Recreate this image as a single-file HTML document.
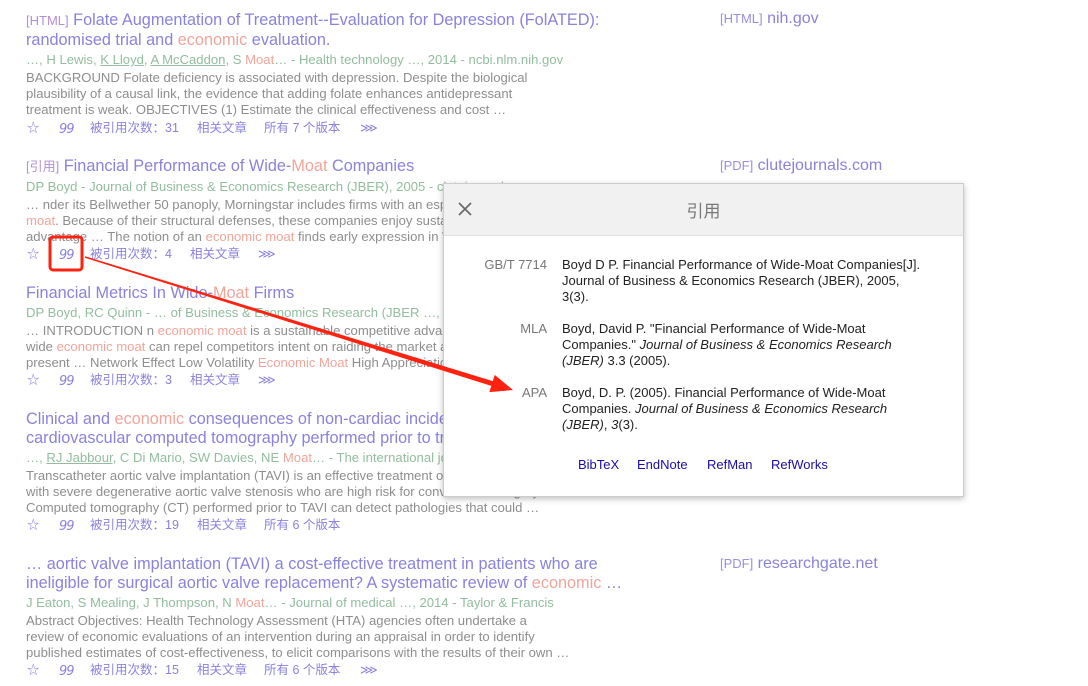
<!DOCTYPE html>
<html><head><meta charset="utf-8"><style>
body{margin:0;width:1088px;height:686px;background:#fff;position:relative;overflow:hidden;font-family:"Liberation Sans","Noto Sans CJK SC",sans-serif}
.l{position:absolute;white-space:nowrap;left:26px}
.t{font-size:16.25px;color:#8a82dc;line-height:20px}
.m{font-size:13.1px;color:#92bd9e;line-height:16px}
.s{font-size:13.1px;color:#8e8e8e;line-height:16px}
.a{position:absolute;white-space:nowrap;font-size:12.5px;color:#8a82dc;line-height:16px;left:0;width:600px;height:16px}
.a span{position:absolute;top:0}
.r{color:#f0a59a}
.b{font-size:13px;color:#b38fd6}
u{text-decoration:underline}
.side{position:absolute;left:720px;font-size:16px;color:#8a82dc;white-space:nowrap}
.side b{font-weight:normal;font-size:13px;color:#9a90dc}
#dlg{position:absolute;left:443px;top:183px;width:519px;height:312px;background:#fff;border:1px solid #ccc;box-shadow:0 2px 6px rgba(0,0,0,.25)}
#hd{height:51px;background:#f1f1f1;border-bottom:1px solid #e0e0e0;position:relative}
#hd .ti{position:absolute;left:0;right:0;text-align:center;top:13px;font-size:17px;color:#777}
.row{position:absolute;font-size:13px;line-height:16px;color:#222}
.lab{position:absolute;width:103px;text-align:right;left:0;color:#777;font-size:13px}
.txt{position:absolute;left:118px;width:362px}
.lk{position:absolute;top:273px;font-size:13px;color:#1a0dab}
.a span.q{font-family:"DejaVu Sans",sans-serif;font-style:italic;font-size:13px;letter-spacing:-1px;top:2px}
</style></head><body>

<div class="l t" style="top:10px"><span class="b">[HTML]</span> Folate Augmentation of Treatment--Evaluation for Depression (FolATED):</div>
<div class="l t" style="top:30px">randomised trial and <span class="r">economic</span> evaluation.</div>
<div class="l m" style="top:52px">…, H Lewis, <u>K Lloyd</u>, <u>A McCaddon</u>, S <span class="r">Moat</span>… - Health technology …, 2014 - ncbi.nlm.nih.gov</div>
<div class="l s" style="top:70px">BACKGROUND Folate deficiency is associated with depression. Despite the biological</div>
<div class="l s" style="top:86px">plausibility of a causal link, the evidence that adding folate enhances antidepressant</div>
<div class="l s" style="top:102px">treatment is weak. OBJECTIVES (1) Estimate the clinical effectiveness and cost …</div>
<div class="a" style="top:120px"><span style="left:27px">☆</span><span class="q" style="left:59px">99</span><span style="left:90px">被引用次数：31</span><span style="left:197px">相关文章</span><span style="left:264px">所有 7 个版本</span><span style="left:360px">⋙</span></div>
<div class="side" style="top:10px"><b>[HTML]</b> nih.gov</div>

<div class="l t" style="top:156px"><span class="b">[引用]</span> Financial Performance of Wide-<span class="r">Moat</span> Companies</div>
<div class="l m" style="top:179px">DP Boyd - Journal of Business &amp; Economics Research (JBER), 2005 - clutejournals</div>
<div class="l s" style="top:197px">… nder its Bellwether 50 panoply, Morningstar includes firms with an especially wide economic</div>
<div class="l s" style="top:213px"><span class="r">moat</span>. Because of their structural defenses, these companies enjoy sustained competitive</div>
<div class="l s" style="top:229px">advantage … The notion of an <span class="r">economic moat</span> finds early expression in Warren</div>
<div class="a" style="top:246px"><span style="left:27px">☆</span><span class="q" style="left:59px">99</span><span style="left:90px">被引用次数：4</span><span style="left:190px">相关文章</span><span style="left:258px">⋙</span></div>
<div class="side" style="top:157px"><b>[PDF]</b> clutejournals.com</div>

<div class="l t" style="top:283px">Financial Metrics In Wide-<span class="r">Moat</span> Firms</div>
<div class="l m" style="top:305px">DP Boyd, RC Quinn - … of Business &amp; Economics Research (JBER …, 2005</div>
<div class="l s" style="top:323px">… INTRODUCTION n <span class="r">economic moat</span> is a sustainable competitive advantage</div>
<div class="l s" style="top:339px">wide <span class="r">economic moat</span> can repel competitors intent on raiding the market and</div>
<div class="l s" style="top:355px">present … Network Effect Low Volatility <span class="r">Economic Moat</span> High Appreciation</div>
<div class="a" style="top:372px"><span style="left:27px">☆</span><span class="q" style="left:59px">99</span><span style="left:90px">被引用次数：3</span><span style="left:190px">相关文章</span><span style="left:258px">⋙</span></div>

<div class="l t" style="top:409px">Clinical and <span class="r">economic</span> consequences of non-cardiac incidental findings</div>
<div class="l t" style="top:428px">cardiovascular computed tomography performed prior to transcatheter</div>
<div class="l m" style="top:450px">…, <u>RJ Jabbour</u>, C Di Mario, SW Davies, NE <span class="r">Moat</span>… - The international journal</div>
<div class="l s" style="top:468px">Transcatheter aortic valve implantation (TAVI) is an effective treatment option for patients</div>
<div class="l s" style="top:484px">with severe degenerative aortic valve stenosis who are high risk for conventional surgery.</div>
<div class="l s" style="top:500px">Computed tomography (CT) performed prior to TAVI can detect pathologies that could …</div>
<div class="a" style="top:517px"><span style="left:27px">☆</span><span class="q" style="left:59px">99</span><span style="left:90px">被引用次数：19</span><span style="left:197px">相关文章</span><span style="left:264px">所有 6 个版本</span></div>

<div class="l t" style="top:554px">… aortic valve implantation (TAVI) a cost-effective treatment in patients who are</div>
<div class="l t" style="top:573px">ineligible for surgical aortic valve replacement? A systematic review of <span class="r">economic</span> …</div>
<div class="l m" style="top:595px">J Eaton, S Mealing, J Thompson, N <span class="r">Moat</span>… - Journal of medical …, 2014 - Taylor &amp; Francis</div>
<div class="l s" style="top:613px">Abstract Objectives: Health Technology Assessment (HTA) agencies often undertake a</div>
<div class="l s" style="top:629px">review of economic evaluations of an intervention during an appraisal in order to identify</div>
<div class="l s" style="top:645px">published estimates of cost-effectiveness, to elicit comparisons with the results of their own …</div>
<div class="a" style="top:662px"><span style="left:27px">☆</span><span class="q" style="left:59px">99</span><span style="left:90px">被引用次数：15</span><span style="left:197px">相关文章</span><span style="left:264px">所有 6 个版本</span><span style="left:360px">⋙</span></div>
<div class="side" style="top:555px"><b>[PDF]</b> researchgate.net</div>

<div id="dlg">
 <div id="hd">
  <svg style="position:absolute;left:14px;top:18px" width="14" height="14"><path d="M1 1L13 13M13 1L1 13" stroke="#666" stroke-width="1.6"/></svg>
  <div class="ti">引用</div>
 </div>
 <div class="row" style="left:0;top:73px;width:519px"><div class="lab">GB/T 7714</div><div class="txt">Boyd D P. Financial Performance of Wide-Moat Companies[J]. Journal of Business &amp; Economics Research (JBER), 2005, 3(3).</div></div>
 <div class="row" style="left:0;top:137px;width:519px"><div class="lab">MLA</div><div class="txt">Boyd, David P. "Financial Performance of Wide-Moat Companies." <i>Journal of Business &amp; Economics Research (JBER)</i> 3.3 (2005).</div></div>
 <div class="row" style="left:0;top:201px;width:519px"><div class="lab">APA</div><div class="txt">Boyd, D. P. (2005). Financial Performance of Wide-Moat Companies. <i>Journal of Business &amp; Economics Research (JBER)</i>, <i>3</i>(3).</div></div>
 <div class="lk" style="left:134px">BibTeX</div>
 <div class="lk" style="left:193px">EndNote</div>
 <div class="lk" style="left:263px">RefMan</div>
 <div class="lk" style="left:327px">RefWorks</div>
</div>

<svg style="position:absolute;left:0;top:0" width="1088" height="686">
 <rect x="50" y="237" width="32" height="33" rx="3" fill="none" stroke="#f21" stroke-width="3"/>
 <polygon points="85.2,256.3 84.8,257.7 491.3,385.9 489.3,392.1 513,390 494.7,374.9 492.7,381.1" fill="#f21"/>
</svg>
</body></html>
